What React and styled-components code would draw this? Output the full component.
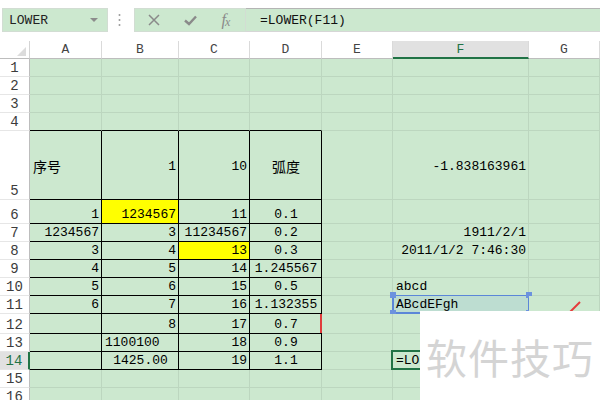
import React from "react";
import styled, { createGlobalStyle } from "styled-components";

const GlobalStyle = createGlobalStyle`
  html, body { margin: 0; padding: 0; background: #fff; }
  body { font-family: "Liberation Mono", "Noto Sans CJK SC", monospace; }
  * { box-sizing: border-box; }
`;

const GREEN = "#cce8cf";
const GRID = "#bcd6bf";
const ACCENT = "#217346";

const widths = [72, 77, 71, 72, 71, 136];
const heights = [18, 18, 18, 18, 69, 24, 18, 18, 18, 18, 18, 20, 18, 18, 18, 18];

const Page = styled.div`
  position: relative;
  width: 600px;
  height: 400px;
  overflow: hidden;
  background: #fff;
`;

const Toolbar = styled.div`
  display: flex;
  align-items: center;
  height: 41px;
  padding: 8px 0 9px 2px;
`;

const NameBox = styled.div`
  width: 106px;
  height: 24px;
  display: flex;
  align-items: center;
  justify-content: space-between;
  padding: 0 9px 0 6px;
  background: ${GREEN};
  border: 1px solid #d2ddd3;
  font-size: 13px;
  color: #222;
`;

const Caret = styled.span`
  width: 0;
  height: 0;
  border-left: 4px solid transparent;
  border-right: 4px solid transparent;
  border-top: 4px solid #8c8c8c;
`;

const Grip = styled.div`
  width: 26px;
  height: 24px;
  display: flex;
  align-items: center;
  padding-left: 10px;
`;

const Buttons = styled.div`
  width: 112px;
  height: 24px;
  display: grid;
  grid-template-columns: repeat(3, 36px);
  padding-left: 1px;
  background: ${GREEN};
  border: 1px solid #d2ddd3;
`;

const Btn = styled.span`
  display: flex;
  align-items: center;
  justify-content: center;
  color: #8a8a8a;
  font-family: "Liberation Serif", serif;
  font-style: italic;
  font-size: 16px;
  line-height: 1;
`;

const FxSub = styled.span`
  font-size: 12px;
  margin-top: 4px;
  margin-left: -1px;
`;

const Formula = styled.div`
  flex: 1;
  height: 24px;
  display: flex;
  align-items: center;
  padding-left: 14px;
  background: ${GREEN};
  border-top: 1px solid #b4b4b4;
  border-bottom: 1px solid #d6d6d6;
  font-size: 13px;
  color: #111;
`;

const Sheet = styled.div`
  display: grid;
  grid-template-columns: 30px ${widths.map((w) => w + "px").join(" ")} 1fr;
  grid-template-rows: 18px ${heights.map((h) => h + "px").join(" ")};
`;

const Corner = styled.div`
  background: #fff;
  border-right: 1px solid #d4d4d4;
  border-bottom: 1px solid #bdbdbd;
  display: flex;
  align-items: flex-end;
  justify-content: flex-end;
  padding: 0 3px 2px 0;
`;

const ColHead = styled.div`
  display: flex;
  align-items: center;
  justify-content: center;
  font-size: 13px;
  color: ${(p) => (p.$active ? ACCENT : "#444")};
  background: ${(p) => (p.$active ? "#e1e1e1" : "#fff")};
  border-right: 1px solid #dadada;
  border-bottom: ${(p) => (p.$active ? `2px solid ${ACCENT}` : "1px solid #bdbdbd")};
`;

const RowHead = styled.div`
  display: flex;
  align-items: flex-end;
  justify-content: center;
  padding-bottom: 0;
  font-size: 14px;
  line-height: 16px;
  color: ${(p) => (p.$active ? ACCENT : "#3c3c3c")};
  background: ${(p) => (p.$active ? "#e1e1e1" : "#fff")};
  border-right: ${(p) => (p.$active ? `2px solid ${ACCENT}` : "1px solid #bdbdbd")};
  border-bottom: 1px solid #e6e6e6;
`;

const Cell = styled.div`
  position: relative;
  display: flex;
  align-items: ${(p) => (p.$middle ? "center" : "flex-end")};
  justify-content: ${(p) =>
    p.$al === "left" ? "flex-start" : p.$al === "center" ? "center" : "flex-end"};
  padding: ${(p) => (p.$middle ? "4px 2px 0 3px" : "0 2px 0 3px")};
  font-size: 13px;
  line-height: 16px;
  white-space: nowrap;
  color: #000;
  background: ${(p) => p.$bg || GREEN};
  border-right: 1px solid ${(p) => (p.$boxed ? "#000" : GRID)};
  border-bottom: 1px solid ${(p) => (p.$boxed || p.$topEdge ? "#000" : GRID)};
`;

const Han = styled.span`
  font-family: "Noto Sans CJK SC", sans-serif;
  font-size: 14px;
`;

const Text = styled.span`
  position: relative;
`;

const Shape = styled.div`
  position: absolute;
  left: -1px;
  top: -1px;
  right: -1px;
  bottom: -1px;
  border: 2px solid #5b86d8;
  border-top-width: 1.5px;
  border-right-width: 1.5px;
  background: rgba(150, 195, 215, 0.28);
`;

const Handle = styled.span`
  position: absolute;
  width: 6px;
  height: 6px;
  background: #6c92de;
  ${(p) => (p.$x === "l" ? "left: -4px;" : "right: -4px;")}
  ${(p) => (p.$y === "t" ? "top: -4px;" : "bottom: -4px;")}
`;

const Active = styled.div`
  position: absolute;
  left: -2px;
  top: -2px;
  right: -1px;
  bottom: -1px;
  border: 2px solid ${ACCENT};
`;

const RedEdge = styled.span`
  position: absolute;
  right: -1px;
  top: 0;
  bottom: 0;
  width: 2px;
  background: #e03c3c;
`;

const Stroke = styled.svg`
  position: absolute;
  left: 34px;
  top: 5px;
  overflow: visible;
`;

const Watermark = styled.div`
  position: absolute;
  left: 420px;
  top: 311px;
  right: 0;
  bottom: 0;
  display: flex;
  align-items: center;
  justify-content: center;
  background: #fff;
  font-family: "Noto Sans CJK SC", sans-serif;
  font-size: 41px;
  letter-spacing: 1px;
  color: #d4d4d4;
  z-index: 5;
`;

const c = (v, al = "right", extra = {}) => ({ v, al, ...extra });
const han = (v, al) => ({ v: <Han>{v}</Han>, al });
const Y = "#ffff00";

// columns A..G per row (1-based rows)
const data = {
  5: [han("序号", "left"), c("1"), c("10"), han("弧度", "center"), null, c("-1.838163961"), null],
  6: [c("1"), c("1234567", "right", { bg: Y }), c("11"), c("0.1", "center"), null, null, null],
  7: [c("1234567"), c("3"), c("11234567"), c("0.2", "center"), null, c("1911/2/1"), null],
  8: [c("3"), c("4"), c("13", "right", { bg: Y }), c("0.3", "center"), null, c("2011/1/2 7:46:30"), null],
  9: [c("4"), c("5"), c("14"), c("1.245567", "center"), null, null, null],
  10: [c("5"), c("6"), c("15"), c("0.5", "center"), null, c("abcd", "left"), null],
  11: [c("6"), c("7"), c("16"), c("1.132355", "center"), null, c("ABcdEFgh", "left", { shape: true }), { stroke: true }],
  12: [null, c("8"), c("17"), c("0.7", "center", { red: true }), null, null, null],
  13: [null, c("1100100", "left"), c("18"), c("0.9", "center"), null, null, null],
  14: [null, c("1425.00", "center"), c("19"), c("1.1", "center"), null, c("=LO", "left", { active: true }), null],
};

const cols = ["A", "B", "C", "D", "E", "F", "G"];

export default function App() {
  return (
    <Page>
      <GlobalStyle />
      <Toolbar>
        <NameBox>
          LOWER
          <Caret />
        </NameBox>
        <Grip>
          <svg width="3" height="14" viewBox="0 0 3 14">
            <circle cx="1.5" cy="2" r="1" fill="#9a9a9a" />
            <circle cx="1.5" cy="7" r="1" fill="#9a9a9a" />
            <circle cx="1.5" cy="12" r="1" fill="#9a9a9a" />
          </svg>
        </Grip>
        <Buttons>
          <Btn>
            <svg width="12" height="12" viewBox="0 0 12 12">
              <path d="M1 1 L11 11 M11 1 L1 11" stroke="#8a8a8a" strokeWidth="1.5" fill="none" />
            </svg>
          </Btn>
          <Btn>
            <svg width="13" height="11" viewBox="0 0 13 11">
              <path d="M1 5.5 L5 9 L12 1.5" stroke="#8a8a8a" strokeWidth="2.4" fill="none" />
            </svg>
          </Btn>
          <Btn>
            f<FxSub>x</FxSub>
          </Btn>
        </Buttons>
        <Formula>=LOWER(F11)</Formula>
      </Toolbar>

      <Sheet>
        <Corner>
          <svg width="9" height="9" viewBox="0 0 9 9">
            <path d="M9 0 L9 9 L0 9 Z" fill="#dcdcdc" />
          </svg>
        </Corner>
        {cols.map((l) => (
          <ColHead key={l} $active={l === "F"}>
            {l}
          </ColHead>
        ))}
        {heights.map((_, i) => {
          const r = i + 1;
          const row = data[r] || [];
          return (
            <React.Fragment key={r}>
              <RowHead $active={r === 14}>{r}</RowHead>
              {cols.map((l, ci) => {
                const cell = row[ci] || {};
                const boxed = r >= 5 && r <= 14 && ci < 4;
                return (
                  <Cell
                    key={l}
                    $al={cell.al}
                    $bg={cell.bg}
                    $boxed={boxed}
                    $topEdge={r === 4 && ci < 4}
                    $middle={r === 5}
                  >
                    {cell.shape && (
                      <Shape>
                        <Handle $x="l" $y="t" />
                        <Handle $x="r" $y="t" />
                        <Handle $x="l" $y="b" />
                        <Handle $x="r" $y="b" />
                      </Shape>
                    )}
                    {cell.active && <Active />}
                    {cell.red && <RedEdge />}
                    {cell.stroke && (
                      <Stroke width="20" height="20">
                        <path d="M17 1 L2 16" stroke="#e53b3b" strokeWidth="2" />
                      </Stroke>
                    )}
                    {cell.v != null && <Text>{cell.v}</Text>}
                  </Cell>
                );
              })}
            </React.Fragment>
          );
        })}
      </Sheet>

      <Watermark>软件技巧</Watermark>
    </Page>
  );
}
